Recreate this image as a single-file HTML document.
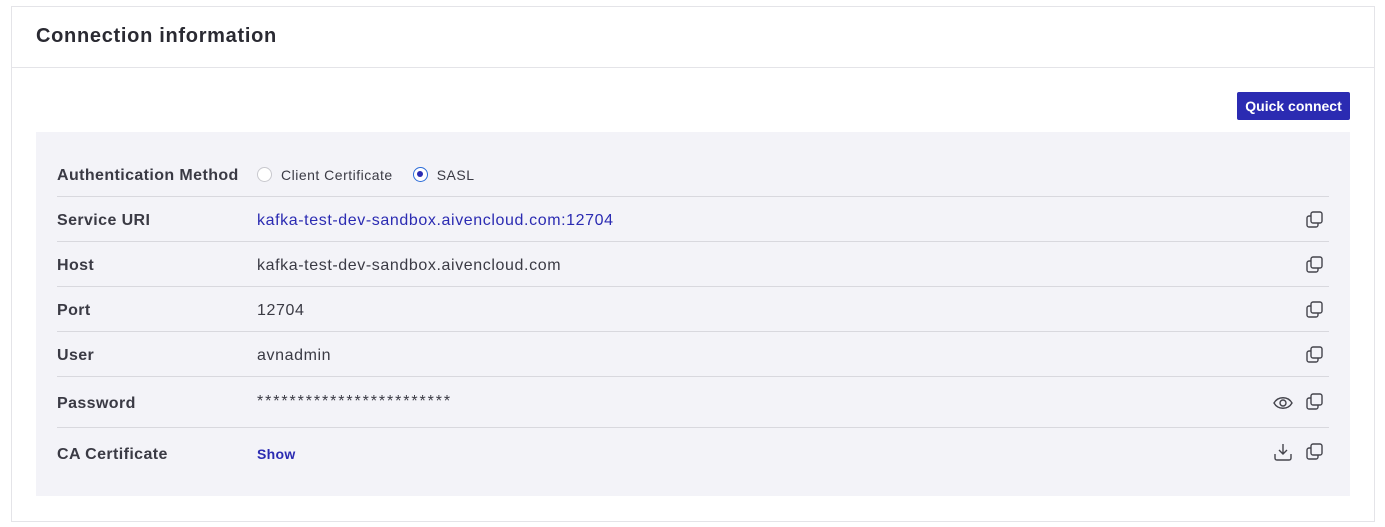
<!DOCTYPE html>
<html><head><style>
*{box-sizing:border-box;margin:0;padding:0}
body{width:1385px;height:527px;background:#fff;font-family:"Liberation Sans",sans-serif;color:#3a3a44;position:relative;overflow:hidden}
.card{position:absolute;left:11px;top:6px;width:1364px;height:516px;border:1px solid #e4e4e8}
.hd{position:absolute;left:0;top:0;right:0;height:61px;border-bottom:1px solid #e4e4e8}
.hd h1{position:absolute;left:24px;top:18px;font-size:20px;font-weight:bold;color:#2a2a32;letter-spacing:0.7px}
.btn{position:absolute;left:1237px;top:92px;width:113px;height:28px;background:#2b2bb2;color:#fff;font-size:14px;font-weight:bold;border-radius:2px;text-align:center;line-height:28px}
.panel{position:absolute;left:36px;top:132px;width:1314px;height:364px;background:#f3f3f8}
.row{position:absolute;left:21px;width:1272px;border-bottom:1px solid #d8d8de;font-size:16px}
.row.last{border-bottom:none}
.lb{position:absolute;left:0;font-weight:bold;color:#3a3a44;letter-spacing:0.4px}
.v{position:absolute;left:200px;letter-spacing:0.6px}
.ic{position:absolute;right:4px}
.eye{position:absolute;right:36px}
.radio{display:inline-block;width:15px;height:15px;border-radius:50%;border:1px solid #c8c8ce;background:#fff;vertical-align:-2px;margin-right:9px}
.radio.on{border:1.5px solid #2b6bd8;position:relative}
.radio.on:after{content:"";position:absolute;left:3px;top:3px;width:6px;height:6px;border-radius:50%;background:#2b2bb2}
a{color:#2b2bb2;text-decoration:none}
</style></head><body>
<div class="card"><div class="hd"><h1>Connection information</h1></div></div>
<div class="btn">Quick connect</div>
<div class="panel">
<div class="row" style="top:20px;height:45px"><span class="lb" style="top:15px">Authentication Method</span><span class="v" style="top:15px;font-size:14px;letter-spacing:0.5px"><span class="radio"></span>Client Certificate<span class="radio on" style="margin-left:20px"></span>SASL</span></div>
<div class="row" style="top:65px;height:45px"><span class="lb" style="top:15px">Service URI</span><span class="v" style="top:15px"><a>kafka-test-dev-sandbox.aivencloud.com:12704</a></span><svg class="ic" style="top:13px" width="20" height="20"><rect x="2" y="6" width="11" height="11" rx="2" fill="none" stroke="#44444c" stroke-width="1.4"/><rect x="6" y="2" width="11" height="11" rx="2" fill="#f3f3f8" stroke="#44444c" stroke-width="1.4"/></svg></div>
<div class="row" style="top:110px;height:45px"><span class="lb" style="top:15px">Host</span><span class="v" style="top:15px">kafka-test-dev-sandbox.aivencloud.com</span><svg class="ic" style="top:13px" width="20" height="20"><rect x="2" y="6" width="11" height="11" rx="2" fill="none" stroke="#44444c" stroke-width="1.4"/><rect x="6" y="2" width="11" height="11" rx="2" fill="#f3f3f8" stroke="#44444c" stroke-width="1.4"/></svg></div>
<div class="row" style="top:155px;height:45px"><span class="lb" style="top:15px">Port</span><span class="v" style="top:15px">12704</span><svg class="ic" style="top:13px" width="20" height="20"><rect x="2" y="6" width="11" height="11" rx="2" fill="none" stroke="#44444c" stroke-width="1.4"/><rect x="6" y="2" width="11" height="11" rx="2" fill="#f3f3f8" stroke="#44444c" stroke-width="1.4"/></svg></div>
<div class="row" style="top:200px;height:45px"><span class="lb" style="top:15px">User</span><span class="v" style="top:15px">avnadmin</span><svg class="ic" style="top:13px" width="20" height="20"><rect x="2" y="6" width="11" height="11" rx="2" fill="none" stroke="#44444c" stroke-width="1.4"/><rect x="6" y="2" width="11" height="11" rx="2" fill="#f3f3f8" stroke="#44444c" stroke-width="1.4"/></svg></div>
<div class="row" style="top:245px;height:51px"><span class="lb" style="top:18px">Password</span><span class="v" style="top:16px;letter-spacing:1.9px">************************</span><svg class="eye" style="top:16px" width="20" height="20"><path d="M1 10 C5 3,15 3,19 10 C15 17,5 17,1 10Z" fill="none" stroke="#44444c" stroke-width="1.4"/><circle cx="10" cy="10" r="3" fill="none" stroke="#44444c" stroke-width="1.4"/></svg><svg class="ic" style="top:15px" width="20" height="20"><rect x="2" y="6" width="11" height="11" rx="2" fill="none" stroke="#44444c" stroke-width="1.4"/><rect x="6" y="2" width="11" height="11" rx="2" fill="#f3f3f8" stroke="#44444c" stroke-width="1.4"/></svg></div>
<div class="row last" style="top:296px;height:50px"><span class="lb" style="top:18px">CA Certificate</span><span class="v" style="top:18px;font-size:14px;font-weight:bold;letter-spacing:0.3px"><a>Show</a></span><svg class="eye" style="top:14px" width="20" height="20"><path d="M10 2V12M6 8L10 12L14 8M2 12V16Q2 18 4 18H16Q18 18 18 16V12" fill="none" stroke="#44444c" stroke-width="1.4"/></svg><svg class="ic" style="top:14px" width="20" height="20"><rect x="2" y="6" width="11" height="11" rx="2" fill="none" stroke="#44444c" stroke-width="1.4"/><rect x="6" y="2" width="11" height="11" rx="2" fill="#f3f3f8" stroke="#44444c" stroke-width="1.4"/></svg></div>
</div>
</body></html>
